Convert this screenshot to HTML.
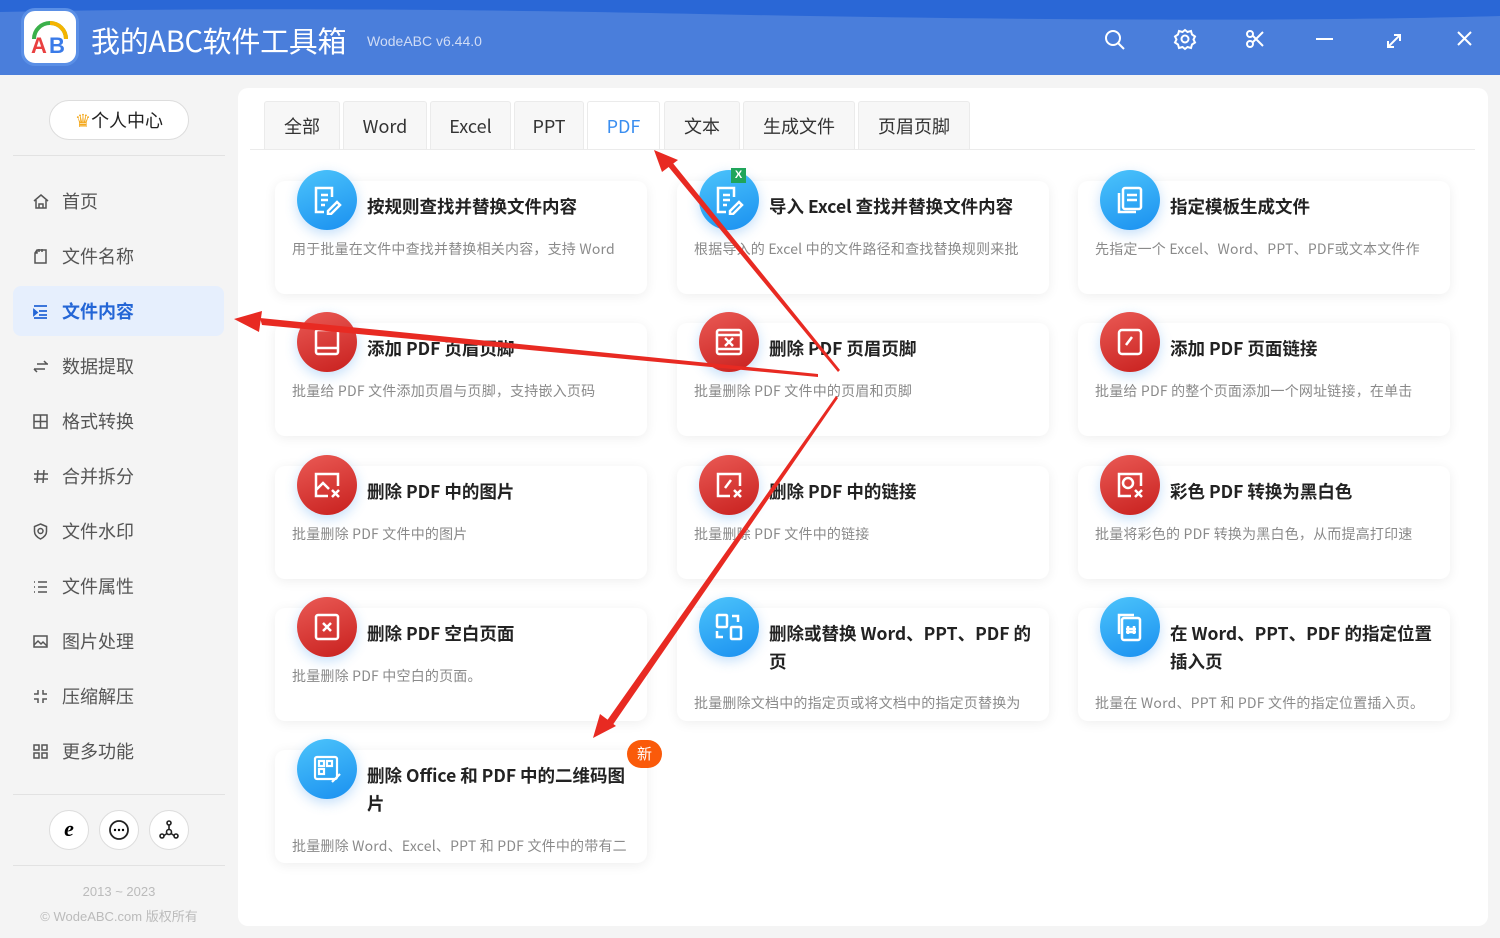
<!DOCTYPE html>
<html><head><meta charset="utf-8"><style>
*{margin:0;padding:0;box-sizing:border-box}
body{width:1500px;height:938px;overflow:hidden;background:#f4f4f4;font-family:"Liberation Sans","Noto Sans CJK SC",sans-serif;position:relative}
.hdr{position:absolute;left:0;top:0;width:1500px;height:75px;background:#4a7edb;overflow:hidden}
.hdr .wave{position:absolute;left:0;top:0;width:1500px;height:30px}
.logo{position:absolute;left:21px;top:8px;width:58px;height:58px;background:#fff;border-radius:14px;border:3px solid #5a8fe6}
.title{position:absolute;left:91px;top:19px;color:#fff;font-size:29px;font-family:"Noto Sans CJK SC",sans-serif;line-height:42px;letter-spacing:-0.3px}
.ver{position:absolute;left:367px;top:33px;color:#d0dcf5;font-size:14px}
.side{position:absolute;left:0;top:75px;width:238px;height:863px}
.pc{position:absolute;left:49px;top:100px;width:140px;height:40px;border:1px solid #ddd;border-radius:20px;background:#fff;font-size:18px;color:#222;text-align:center;line-height:38px;font-family:"Noto Sans CJK SC",sans-serif}
.hr{position:absolute;left:13px;width:212px;height:1px;background:#e2e2e2}
.nav{position:absolute;left:13px;width:211px;height:50px;font-size:18px;color:#555;line-height:50px;padding-left:49px;font-family:"Noto Sans CJK SC",sans-serif}
.nav .ic{position:absolute;left:19px;top:17px;width:17px;height:17px}
.nav.act{background:#e6effd;border-radius:8px;color:#2466d6;font-weight:bold}
.circ{position:absolute;top:810px;width:40px;height:40px;border-radius:50%;background:#fff;border:1px solid #ddd}
.copy{position:absolute;left:0;width:238px;text-align:center;color:#bbb;font-size:13px}
.main{position:absolute;left:238px;top:88px;width:1250px;height:838px;background:#fff;border-radius:10px}
.tab{position:absolute;top:101px;height:48px;background:#f7f7f7;border:1px solid #ebebeb;border-bottom:none;border-radius:3px 3px 0 0;font-size:18px;color:#333;text-align:center;line-height:48px;font-family:"Noto Sans CJK SC",sans-serif}
.tab.act{background:#fff;color:#3a8ef0;height:49px}
.tline{position:absolute;left:250px;top:149px;width:1225px;height:1px;background:#ebebeb}
.card{position:absolute;width:372px;height:113px;background:#fff;border-radius:10px;box-shadow:0 2px 12px rgba(0,0,0,.07)}
.card .ico{position:absolute;left:22px;top:-11px;width:60px;height:60px;border-radius:50%;box-shadow:0 4px 12px rgba(60,150,240,.3)}
.blue{background:linear-gradient(160deg,#4cc4fb,#1a90f0)}
.red{background:linear-gradient(160deg,#ea5a55,#c8201e)}
.card .t{position:absolute;left:92px;top:12px;width:270px;font-size:17.5px;font-weight:bold;color:#222;line-height:28px;font-family:"Noto Sans CJK SC",sans-serif}
.card .d{position:absolute;left:17px;width:338px;white-space:nowrap;overflow:hidden;font-size:14px;color:#8a8a8a;font-family:"Noto Sans CJK SC",sans-serif;letter-spacing:0.2px}
.ico svg{position:absolute;left:15px;top:15px}
.new{position:absolute;left:627px;top:740px;width:35px;height:28px;border-radius:14px;background:#fa5a0a;color:#fff;font-size:15px;text-align:center;line-height:28px;font-family:"Noto Sans CJK SC",sans-serif}
</style></head><body>
<div class="hdr">
<svg class="wave" viewBox="0 0 1500 30" preserveAspectRatio="none"><path d="M0 0H1500V16C1300 22 1000 20 700 14 400 8 200 8 0 12Z" fill="#2a67d6"/></svg>
<div class="logo"><svg width="52" height="52" viewBox="0 0 52 52"><path d="M10 28a16 16 0 0 1 32 0" fill="none" stroke="#3ab04a" stroke-width="4"/><path d="M26 12a16 16 0 0 1 16 16" fill="none" stroke="#f5b400" stroke-width="4"/><text x="7" y="42" font-size="22" font-weight="bold" fill="#e94040" font-family="Liberation Sans">A</text><text x="25" y="42" font-size="22" font-weight="bold" fill="#3a7be8" font-family="Liberation Sans">B</text></svg></div>
<div class="title">我的ABC软件工具箱</div>
<div class="ver">WodeABC v6.44.0</div>
<svg style="position:absolute;left:1100px;top:25px" width="380" height="30" fill="none" stroke="#fff" stroke-width="2">
<circle cx="13" cy="13" r="7"/><path d="M18 18l6 6"/>
<circle cx="85" cy="14" r="3.5"/><path d="M85 5l2.5 2 3.5-1 1 3.5 3 2-1.5 3 1.5 3-3 2-1 3.5-3.5-1-2.5 2-2.5-2-3.5 1-1-3.5-3-2 1.5-3-1.5-3 3-2 1-3.5 3.5 1z"/>
<circle cx="150" cy="9" r="3"/><circle cx="150" cy="19" r="3"/><path d="M153 11l10 10M153 17l10-10"/>
<path d="M216 14h17"/>
<path d="M288 22l12-12M294 10h6v6M288 16v6h6"/>
<path d="M358 7l13 13M371 7l-13 13"/>
</svg>
</div>
<div class="side">
<div class="pc" style="top:25px"><span style="color:#f4a81c">♛</span>个人中心</div>
<div class="hr" style="top:80px"></div>
<div class="nav" style="top:101px"><svg class="ic" fill="none" stroke="#555" stroke-width="1.5"><path d="M2 8l7-6 7 6M4 7v8h10V7M7 15v-4h4v4"/></svg>首页</div>
<div class="nav" style="top:156px"><svg class="ic" fill="none" stroke="#555" stroke-width="1.5"><path d="M5 2h9v13H3V5zM5 2v3H3M7 1v3M10 1v3"/></svg>文件名称</div>
<div class="nav act" style="top:211px"><svg class="ic" fill="none" stroke="#2466d6" stroke-width="1.8"><path d="M2 3h13M7 8h8M7 12h8M2 15h13"/><path d="M2 7l3 2.5-3 2.5z" fill="#2466d6"/></svg>文件内容</div>
<div class="nav" style="top:266px"><svg class="ic" fill="none" stroke="#555" stroke-width="1.5"><path d="M5 6h11M12 3l3 3M2 11h11M5 14l-3-3"/></svg>数据提取</div>
<div class="nav" style="top:321px"><svg class="ic" fill="none" stroke="#555" stroke-width="1.5"><rect x="2" y="2" width="13" height="13"/><path d="M8.5 2v13M2 8.5h13"/></svg>格式转换</div>
<div class="nav" style="top:376px"><svg class="ic" fill="none" stroke="#555" stroke-width="1.5"><path d="M6 2l-1 13M12 2l-1 13M2 6h14M2 11h14"/></svg>合并拆分</div>
<div class="nav" style="top:431px"><svg class="ic" fill="none" stroke="#555" stroke-width="1.5"><path d="M8.5 1l6 2.5v5c0 4-3 6-6 7.5-3-1.5-6-3.5-6-7.5v-5z"/><circle cx="8.5" cy="8" r="2.5"/></svg>文件水印</div>
<div class="nav" style="top:486px"><svg class="ic" fill="none" stroke="#555" stroke-width="1.5"><path d="M2 4h1M6 4h9M2 9h1M6 9h9M2 14h1M6 14h9"/></svg>文件属性</div>
<div class="nav" style="top:541px"><svg class="ic" fill="none" stroke="#555" stroke-width="1.5"><rect x="2" y="3" width="13" height="11"/><path d="M2 12l4-4 3 3 2-2 4 4"/></svg>图片处理</div>
<div class="nav" style="top:596px"><svg class="ic" fill="none" stroke="#555" stroke-width="1.5"><path d="M6 2v4H2M11 2v4h4M6 15v-4H2M11 15v-4h4"/></svg>压缩解压</div>
<div class="nav" style="top:651px"><svg class="ic" fill="none" stroke="#555" stroke-width="1.5"><rect x="2" y="2" width="5" height="5"/><rect x="10" y="2" width="5" height="5"/><rect x="2" y="10" width="5" height="5"/><rect x="10" y="10" width="5" height="5"/></svg>更多功能</div>
<div class="hr" style="top:719px"></div>
<div class="hr" style="top:790px"></div>
<div class="copy" style="top:809px">2013 ~ 2023</div>
<div class="copy" style="top:831px">© WodeABC.com 版权所有</div>
</div>
<div class="circ" style="left:49px;font:bold 22px 'Liberation Serif';text-align:center;line-height:36px;font-style:italic">e</div>
<div class="circ" style="left:99px"><svg width="38" height="38"><circle cx="19" cy="19" r="9" fill="none" stroke="#222" stroke-width="1.8"/><circle cx="15" cy="19" r="1.2"/><circle cx="19" cy="19" r="1.2"/><circle cx="23" cy="19" r="1.2"/></svg></div>
<div class="circ" style="left:149px"><svg width="38" height="38" fill="none" stroke="#222" stroke-width="1.6"><circle cx="19" cy="12" r="2"/><circle cx="12" cy="25" r="2"/><circle cx="26" cy="25" r="2"/><circle cx="19" cy="21" r="2.5"/><path d="M19 14v4.5M17 22.5l-3 2M21 22.5l3 2"/></svg></div>
<div class="main"></div>
<div class="tab" style="left:264px;width:76px">全部</div>
<div class="tab" style="left:343px;width:84px">Word</div>
<div class="tab" style="left:430px;width:81px">Excel</div>
<div class="tab" style="left:514px;width:70px">PPT</div>
<div class="tab act" style="left:587px;width:73px">PDF</div>
<div class="tab" style="left:664px;width:76px">文本</div>
<div class="tab" style="left:743px;width:112px">生成文件</div>
<div class="tab" style="left:858px;width:112px">页眉页脚</div>
<div class="tline"></div>

<div class="card" style="left:275px;top:181px"><div class="ico blue"><svg width="30" height="30" fill="none" stroke="#fff" stroke-width="2.5"><path d="M20 12V3H4v24h8M9 10h7M9 15h7M9 20h4M16 26l9-9 3 3-9 9h-3z"/></svg></div><div class="t">按规则查找并替换文件内容</div><div class="d" style="top:58px">用于批量在文件中查找并替换相关内容，支持 Word</div></div>
<div class="card" style="left:677px;top:181px"><div class="ico blue"><svg width="30" height="30" fill="none" stroke="#fff" stroke-width="2.5"><path d="M20 12V3H4v24h8M9 10h7M9 15h7M9 20h4M16 26l9-9 3 3-9 9h-3z"/></svg><div style="position:absolute;left:32px;top:-2px;width:15px;height:15px;background:#1fa55a;color:#fff;font:bold 11px 'Liberation Sans';text-align:center;line-height:15px">X</div></div><div class="t">导入 Excel 查找并替换文件内容</div><div class="d" style="top:58px">根据导入的 Excel 中的文件路径和查找替换规则来批</div></div>
<div class="card" style="left:1078px;top:181px"><div class="ico blue"><svg width="30" height="30" fill="none" stroke="#fff" stroke-width="2.5"><rect x="8" y="3" width="18" height="21" rx="2"/><path d="M4 8v19h17M12 10h10M12 15h10"/></svg></div><div class="t">指定模板生成文件</div><div class="d" style="top:58px">先指定一个 Excel、Word、PPT、PDF或文本文件作</div></div>

<div class="card" style="left:275px;top:323px"><div class="ico red"><svg width="30" height="30" fill="none" stroke="#fff" stroke-width="2.5"><rect x="4" y="3" width="22" height="24" rx="2"/><path d="M4 21h22"/></svg></div><div class="t">添加 PDF 页眉页脚</div><div class="d" style="top:58px">批量给 PDF 文件添加页眉与页脚，支持嵌入页码</div></div>
<div class="card" style="left:677px;top:323px"><div class="ico red"><svg width="30" height="30" fill="none" stroke="#fff" stroke-width="2.5"><rect x="3" y="3" width="24" height="24" rx="2"/><path d="M3 8h24M3 22h24M11 11l8 8M19 11l-8 8"/></svg></div><div class="t">删除 PDF 页眉页脚</div><div class="d" style="top:58px">批量删除 PDF 文件中的页眉和页脚</div></div>
<div class="card" style="left:1078px;top:323px"><div class="ico red"><svg width="30" height="30" fill="none" stroke="#fff" stroke-width="2.5"><rect x="4" y="3" width="22" height="24" rx="3"/><path d="M17 10l-6 8"/></svg></div><div class="t">添加 PDF 页面链接</div><div class="d" style="top:58px">批量给 PDF 的整个页面添加一个网址链接，在单击</div></div>

<div class="card" style="left:275px;top:466px"><div class="ico red"><svg width="30" height="30" fill="none" stroke="#fff" stroke-width="2.5"><path d="M16 26H4V4h22v12M4 20l7-7 6 6M20 20l7 7M27 20l-7 7"/></svg></div><div class="t">删除 PDF 中的图片</div><div class="d" style="top:58px">批量删除 PDF 文件中的图片</div></div>
<div class="card" style="left:677px;top:466px"><div class="ico red"><svg width="30" height="30" fill="none" stroke="#fff" stroke-width="2.5"><path d="M16 26H4V4h22v12M17 10l-6 8M20 20l7 7M27 20l-7 7"/></svg></div><div class="t">删除 PDF 中的链接</div><div class="d" style="top:58px">批量删除 PDF 文件中的链接</div></div>
<div class="card" style="left:1078px;top:466px"><div class="ico red"><svg width="30" height="30" fill="none" stroke="#fff" stroke-width="2.5"><path d="M16 26H4V4h22v12M20 20l7 7M27 20l-7 7"/><circle cx="13" cy="13" r="5"/></svg></div><div class="t">彩色 PDF 转换为黑白色</div><div class="d" style="top:58px">批量将彩色的 PDF 转换为黑白色，从而提高打印速</div></div>

<div class="card" style="left:275px;top:608px"><div class="ico red"><svg width="30" height="30" fill="none" stroke="#fff" stroke-width="2.5"><rect x="4" y="3" width="22" height="24" rx="2"/><path d="M11 11l8 8M19 11l-8 8"/></svg></div><div class="t">删除 PDF 空白页面</div><div class="d" style="top:58px">批量删除 PDF 中空白的页面。</div></div>
<div class="card" style="left:677px;top:608px"><div class="ico blue"><svg width="30" height="30" fill="none" stroke="#fff" stroke-width="2.5"><rect x="3" y="3" width="10" height="12" rx="1"/><rect x="17" y="15" width="10" height="12" rx="1"/><path d="M18 4h6v6M3 19v6h6"/></svg></div><div class="t">删除或替换 Word、PPT、PDF 的页</div><div class="d" style="top:85px">批量删除文档中的指定页或将文档中的指定页替换为</div></div>
<div class="card" style="left:1078px;top:608px"><div class="ico blue"><svg width="30" height="30" fill="none" stroke="#fff" stroke-width="2.5"><rect x="7" y="6" width="18" height="22" rx="2"/><path d="M4 22V3h15M13 14v8M19 14v8M11 17h10M11 20h10"/></svg></div><div class="t">在 Word、PPT、PDF 的指定位置插入页</div><div class="d" style="top:85px">批量在 Word、PPT 和 PDF 文件的指定位置插入页。</div></div>

<div class="card" style="left:275px;top:750px"><div class="ico blue"><svg width="30" height="30" fill="none" stroke="#fff" stroke-width="2.2"><rect x="3" y="3" width="22" height="22" rx="2"/><rect x="7" y="7" width="5" height="5"/><rect x="15" y="7" width="5" height="5"/><rect x="7" y="15" width="5" height="5"/><path d="M20 28l8-8"/></svg></div><div class="t">删除 Office 和 PDF 中的二维码图片</div><div class="d" style="top:86px">批量删除 Word、Excel、PPT 和 PDF 文件中的带有二</div></div>
<div class="new">新</div>

<svg style="position:absolute;left:0;top:0" width="1500" height="938">
<g fill="#e82a22">
<polygon points="818,374 260,318 262,325 818,377"/>
<polygon points="234,319 262,311 259,332"/>
<polygon points="838,372 667,165 672,162 840,370"/>
<polygon points="654,150 678,160 662,172"/>
<polygon points="836,396 606,722 612,726 838,398"/>
<polygon points="593,738 600,714 616,726"/>
</g>
</svg>
</body></html>
